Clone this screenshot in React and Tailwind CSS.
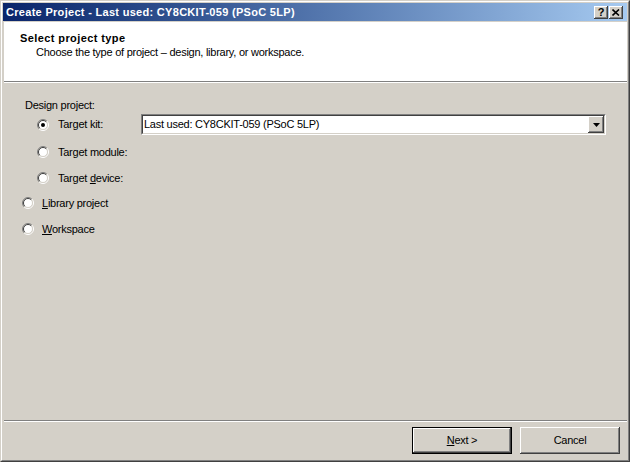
import React from "react";

const font = { fontFamily: '"Liberation Sans", Arial, sans-serif' };

const Radio = ({ checked }) => (
  <svg width="12" height="12" viewBox="0 0 12 12" className="shrink-0">
    <circle cx="6" cy="6" r="4.5" fill="#fff" />
    <path d="M2.1 9.9 A5.5 5.5 0 0 1 9.9 2.1" fill="none" stroke="#808080" />
    <path d="M9.9 2.1 A5.5 5.5 0 0 1 2.1 9.9" fill="none" stroke="#fff" />
    <path d="M2.8 9.2 A4.5 4.5 0 0 1 9.2 2.8" fill="none" stroke="#404040" />
    <path d="M9.2 2.8 A4.5 4.5 0 0 1 2.8 9.2" fill="none" stroke="#d4d0c8" />
    {checked && <circle cx="6" cy="6" r="2" fill="#000" />}
  </svg>
);

const raised =
  "shadow-[inset_-1px_-1px_#404040,inset_1px_1px_#fff,inset_-2px_-2px_#808080,inset_2px_2px_#d4d0c8]";

const TitleButton = ({ children }) => (
  <div
    className={`w-[14px] h-[13px] bg-[#d4d0c8] ${raised} flex items-center justify-center text-[11px] font-bold leading-none text-black`}
  >
    {children}
  </div>
);

const Option = ({ checked, indent, children, className = "" }) => (
  <div className={`flex items-center h-[20px] ${indent} ${className}`}>
    <Radio checked={checked} />
    {children}
  </div>
);

export default function App() {
  return (
    <div
      className="w-[630px] h-[462px] bg-[#d4d0c8] text-black text-[11px] tracking-[-0.25px]"
      style={font}
    >
      <div className="w-full h-full border border-t-[#d4d0c8] border-l-[#d4d0c8] border-b-[#404040] border-r-[#404040]">
        <div className="w-full h-full border border-t-white border-l-white border-b-[#808080] border-r-[#808080] p-[1px] flex flex-col">
          {/* title bar */}
          <div className="h-[18px] flex items-center bg-gradient-to-r from-[#0a246a] to-[#a6caf0] pl-[3px] pr-[4px]">
            <span className="flex-1 text-white font-bold tracking-[0.3px] leading-none">
              Create Project - Last used: CY8CKIT-059 (PSoC 5LP)
            </span>
            <div className="flex gap-[1px]">
              <TitleButton>?</TitleButton>
              <TitleButton>
                <svg width="8" height="7" viewBox="0 0 8 7">
                  <path d="M0.5 0.5 L7 6.5 M7 0.5 L0.5 6.5" stroke="#000" strokeWidth="1.6" />
                </svg>
              </TitleButton>
            </div>
          </div>

          <div className="flex-1 flex flex-col mt-[1px] pl-[1px]">
            {/* header */}
            <div className="h-[59px] bg-white pt-[9px] pl-[16px] leading-[14px]">
              <div className="font-bold tracking-[0.4px]">Select project type</div>
              <div className="pl-[16px]">
                Choose the type of project – design, library, or workspace.
              </div>
            </div>
            <div className="h-[1px] bg-[#808080]" />
            <div className="h-[1px] bg-white" />

            {/* body */}
            <div className="flex-1 flex flex-col pt-[15px]">
              <div className="h-[14px] leading-[14px] pl-[21px]">Design project:</div>
              <div className="flex items-center h-[21px] mt-[2px] pl-[33px]">
                <Radio checked />
                <span className="ml-[9px] w-[83px]">Target kit:</span>
                <div className="w-[465px] h-[21px] border border-t-[#808080] border-l-[#808080] border-b-white border-r-white">
                  <div className="w-full h-full border border-t-[#404040] border-l-[#404040] border-b-[#d4d0c8] border-r-[#d4d0c8] bg-white flex items-center">
                    <span className="flex-1 pl-[1px]">Last used: CY8CKIT-059 (PSoC 5LP)</span>
                    <div className={`w-[16px] h-full bg-[#d4d0c8] ${raised} flex items-center justify-center`}>
                      <svg width="7" height="4" viewBox="0 0 7 4">
                        <path d="M0 0 H7 L3.5 4 Z" fill="#000" />
                      </svg>
                    </div>
                  </div>
                </div>
              </div>
              <Option indent="pl-[33px]" className="mt-[7px]">
                <span className="ml-[9px]">Target module:</span>
              </Option>
              <Option indent="pl-[33px]" className="mt-[6px]">
                <span className="ml-[9px]">
                  Target <span className="underline">d</span>evice:
                </span>
              </Option>
              <Option indent="pl-[18px]" className="mt-[5px]">
                <span className="ml-[8px]">
                  <span className="underline">L</span>ibrary project
                </span>
              </Option>
              <Option indent="pl-[18px]" className="mt-[6px]">
                <span className="ml-[8px]">
                  <span className="underline">W</span>orkspace
                </span>
              </Option>
            </div>

            {/* footer */}
            <div className="h-[1px] bg-[#808080]" />
            <div className="h-[1px] bg-white" />
            <div className="h-[37px] flex justify-end items-start pt-[5px] pr-[7px] gap-[8px]">
              <div className="w-[100px] h-[27px] border border-black">
                <div className={`w-full h-full ${raised} flex items-center justify-center`}>
                  <span>
                    <span className="underline">N</span>ext &gt;
                  </span>
                </div>
              </div>
              <div className={`w-[100px] h-[27px] ${raised} flex items-center justify-center`}>
                Cancel
              </div>
            </div>
          </div>
        </div>
      </div>
    </div>
  );
}
